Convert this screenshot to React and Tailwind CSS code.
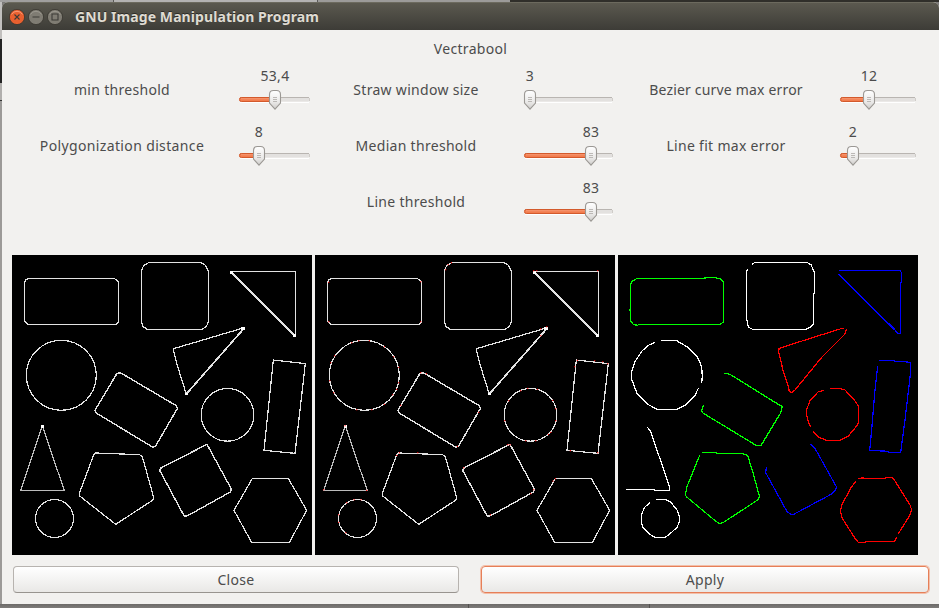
import React from "react";

const FONT = "font-['Noto_Sans','Open_Sans',sans-serif]";

function WindowButton({ active, children }) {
  return (
    <svg viewBox="0 0 16 16" className="h-4 w-4 shrink-0">
      <circle cx="8" cy="8" r="7.6" fill={active ? "#e9602f" : "#7f7c73"} stroke="#37352f" strokeWidth="0.8" />
      <path d="M2.5 5.5A6.3 6.3 0 0 1 13.5 5.5" fill="none" stroke={active ? "#f79a76" : "#9a978e"} strokeWidth="1" />
      <g fill="none" stroke="#3c3b37" strokeWidth="1.1">{children}</g>
    </svg>
  );
}

function Slider({ width, pos, value }) {
  return (
    <div className="h-14 shrink-0" style={{ width }}>
      <div className="h-[28px] pt-[4px]">
        <div className="w-10 text-center leading-5" style={{ marginLeft: pos - 20 }}>{value}</div>
      </div>
      <svg className="block h-[20px] overflow-visible" width={width} height="20" viewBox={`0 0 ${width} 20`}>
        <rect x="0.5" y="7.5" width={width - 1} height="4" rx="1.8" fill="#e3e1df" />
        <path d={`M1 7.5H${width - 1}`} stroke="#b9b5b1" />
        <path d={`M1 12.5H${width - 1}`} stroke="#ffffff" />
        <path d={`M${width - 0.5} 8V11`} stroke="#cfccc8" />
        {pos > 7 && (
          <>
            <rect x="0.5" y="7.5" width={pos} height="4" rx="1.8" fill="#f27c4d" stroke="#d35a2c" />
            <path d={`M2 8.8H${pos}`} stroke="#f8a27f" strokeWidth="0.8" />
          </>
        )}
        <g transform={`translate(${pos - 6} 0)`}>
          <path d="M0.5 4.5Q0.5 0.5 4.5 0.5H7.5Q11.5 0.5 11.5 4.5V13L6 19.2L0.5 13Z" fill="url(#thumb)" stroke="#9b9894" strokeWidth="1.1" />
          <path d="M4 7.5H8M4 9.5H8M4 11.5H8" stroke="#b5b2af" strokeWidth="0.9" />
        </g>
      </svg>
    </div>
  );
}

function Label({ className, children }) {
  return <div className={`flex h-14 shrink-0 items-center justify-center whitespace-nowrap pb-[2px] ${className}`}>{children}</div>;
}

function Frame({ children }) {
  return (
    <svg viewBox="9 15 900 900" className="block h-[300px] w-[300px] shrink-0 bg-black">
      {children}
    </svg>
  );
}

function Edges() {
  return (
    <g fill="none" stroke="#e2e2e2" strokeWidth="3.7" strokeLinejoin="round" shapeRendering="crispEdges">
      <path d="M60 85.500H316L328.500 95V216L320 223.500H56L46.500 214V97L52 88Z" />
      <path d="M420 37.500H576L590 46L598.500 66V214L592 230L578 238.500H416L402 230L396.500 214V64L404 46Z" />
      <path d="M668 64.500H858.500V258" />
      <path d="M667 66L858 258" strokeWidth="5.6" />
      <path d="M532 433L506 350L494 304V296L706 233" />
      <path d="M706 234L532 432" strokeWidth="5.2" />
      <circle cx="157" cy="376" r="105" />
      <path d="M324 370L334 368L500 466L506 474L440 588L432 592L260 488L258 481Z" strokeWidth="4.2" />
      <circle cx="655.5" cy="494.5" r="79" />
      <path d="M793 330L889 341L858 610L765 601Z" />
      <path d="M100 528L166 721.500H35Z" stroke="#bcbcbc" />
      <path d="M260 609L392 614L400 620L434 742L432 750L320 823L212 738L211 730L254 615Z" />
      <path d="M594 583L667 717L664 726L536 797L526 799L452 661L454 655Z" strokeWidth="4.2" />
      <path d="M730 685.500H838L893 781L841 877.500H728L675 781Z" />
      <circle cx="136.5" cy="805.5" r="57" />
      <g fill="#fff" stroke="none">
        <path d="M663 62h9v10h-9zM853 253h9v8h-9zM696 231h12v9h-12zM527 428h9v7h-9zM96 525h8v9h-8z" />
      </g>
    </g>
  );
}

const MARKS = [
  [50, 97], [326, 95], [50, 215], [326, 215], [401, 59], [408, 44], [418, 38], [665, 62], [674, 62], [857, 62],
  [704, 230], [686, 236], [686, 257], [140, 272], [172, 272], [119, 278], [217, 290], [245, 320], [260, 352],
  [260, 398], [254, 418], [242, 434], [217, 463], [179, 479], [134, 479], [65, 428], [53, 392], [56, 338], [68, 317],
  [326, 368], [343, 371], [266, 466], [500, 487], [436, 589], [647, 415], [676, 418], [626, 422], [590, 452],
  [722, 451], [731, 476], [578, 512], [731, 512], [716, 547], [709, 553], [671, 572], [641, 572],
  [796, 331], [788, 350], [848, 332], [872, 335], [887, 341], [775, 602], [857, 608], [99, 527], [35, 719], [164, 721],
  [262, 608], [317, 608], [254, 616], [587, 584], [594, 584], [665, 719], [656, 731], [535, 794], [455, 653],
  [730, 686], [723, 693], [126, 749], [147, 749], [104, 758], [80, 794], [80, 817], [101, 848],
];

function Traced() {
  return (
    <g fill="none" strokeWidth="3.7" shapeRendering="crispEdges">
      <g stroke="#00ff00">
        <path d="M69 223.500H315L325.500 216V95L316 87L300 82.500H270V85.500H66L52 93L46.500 103V175L43.500 180L46.500 185V213L56 224L69 226" />
        <path d="M327 370.500H338L350 376L480 457L502 470L496 490L438 586.500H424L410 578L262 488L260 480L266 466" />
        <path d="M262 607.500H304L306 610.500H382L398 616L415 672L433 738L431 748L324 818L314 821L304 815L214 740L211.500 735L215 712L254 616" />
      </g>
      <g stroke="#ffffff">
        <path d="M410 44L419 37.500H576L588 44L598.500 68V130L595.500 131V222L586 232L570 238.500H414L401 232L397 222V212L394.500 210V65L397 58" />
        <path d="M120 277L100 286L80 304L60 335L49.500 365V386L58 410L66 430L100 464L128 478.500H184L210 466L240 436L250 415M260 398L262 380L260 350L248 322L220 293L184 271.500H138" />
        <path d="M97 532L106 542L163.500 710V721.500H118V718.500H33" />
        <path d="M124 748.500H150L166 755L186 780L193.500 800V815L186 832L160 856L148 862.500H122L104 853L84 832L79.500 820V795L88 773L104 758" />
      </g>
      <g stroke="#0000ff">
        <path d="M670 72L840 240L849 250.500H856.500V100L859.500 96V68L855 61.500H672" />
        <path d="M670 72L840 240" strokeWidth="4.6" />
        <path d="M792 331.500H835L840 334.500H868L886.500 338V370L870 510L857 607.500H820V604L764 601L770 540L780 420L788 348" />
        <path d="M587 583L600 595L664 710L662 720L650 732L536 793L525 792L515 783L452 668L454 652" />
      </g>
      <g stroke="#ff0000">
        <path d="M694 237L690 252L620 322L540 420L530 428L523 425L520 410L505 365L491 305L492 296L498 293L640 248L680 235.500H687" />
        <path d="M627 421L610 425L585 452L574.500 480V495L580 515L587 530M595 545L612 562L636 571.500H674L700 558L725 528L730.500 518V470L722 455L690 420L674 415.500H645" />
        <path d="M722 694L710 710L680 765L676.500 785L682 805L720 865L730 877.500H752V874.500H838L845 862M850 851L885 795L890 780L885 765L840 693L832 682.500H812L810 685.500H730M738 682.500H748" />
      </g>
    </g>
  );
}

export default function App() {
  return (
    <div className={`flex h-[608px] w-[939px] flex-col overflow-hidden bg-[#7b7977] text-[14px] tracking-[0.3px] text-[#4c4c4c] ${FONT}`}>
      <svg width="0" height="0" className="absolute">
        <defs>
          <linearGradient id="thumb" x1="0" y1="0" x2="0" y2="1">
            <stop offset="0" stopColor="#ffffff" />
            <stop offset="0.6" stopColor="#ebeae9" />
            <stop offset="1" stopColor="#cfcdca" />
          </linearGradient>
        </defs>
      </svg>
      <div className="flex h-0.5 shrink-0">
        <div className="w-[113px] bg-[#a09f9e]" />
        <div className="w-px bg-[#5a5957]" />
        <div className="w-[203px] bg-[#b4b3b2]" />
        <div className="w-px bg-[#5a5957]" />
        <div className="w-[192px] bg-[#9c9b99]" />
        <div className="flex-1 bg-[#302f2a]" />
      </div>
      <div className="flex h-[602px] shrink-0">
        <div className="flex w-0.5 shrink-0 flex-col bg-[#9c9a98]">
          <div className="h-[37px] bg-[#c2c0be]" />
          <div className="h-[44px] bg-[#242424]" />
          <div className="h-[17px] bg-[#b1afad]" />
          <div className="h-px bg-[#333333]" />
        </div>
        <div className="flex w-[937px] flex-col overflow-hidden rounded-t-md bg-[#f2f1ef]">
          <div className="flex h-7 shrink-0 items-center gap-[3px] border-t border-[#6c6a5e] bg-linear-to-b from-[#5b594f] to-[#3d3c37] pl-[7px]">
            <WindowButton active><path d="M5.500 5.500L10.500 10.500M10.500 5.500L5.500 10.500" /></WindowButton>
            <WindowButton><path d="M4.500 8H11.500" /></WindowButton>
            <WindowButton><path d="M5 5H11V11H5Z" /></WindowButton>
            <h1 className="ml-[9px] whitespace-nowrap text-[14px] font-bold leading-none tracking-[0.08px] text-[#dfdbd2] [text-shadow:0_-1px_0_#2c2b27]">GNU Image Manipulation Program</h1>
          </div>
          <div className="flex h-8 shrink-0 items-end justify-center pb-[3px] leading-5">Vectrabool</div>
          <div className="flex flex-col">
            <div className="flex pl-[10px]">
              <Label className="w-[220px]">min threshold</Label>
              <div className="w-[7px]" />
              <Slider width={71} pos={36} value="53,4" />
              <Label className="ml-[10px] w-[192px]">Straw window size</Label>
              <div className="w-3" />
              <Slider width={89} pos={6} value="3" />
              <Label className="ml-[17px] w-[192px] tracking-[0.18px]">Bezier curve max error</Label>
              <div className="w-[18px]" />
              <Slider width={76} pos={29} value="12" />
            </div>
            <div className="flex pl-[10px]">
              <Label className="w-[220px] tracking-[0.36px]">Polygonization distance</Label>
              <div className="w-[7px]" />
              <Slider width={71} pos={20} value="8" />
              <Label className="ml-[10px] w-[192px]">Median threshold</Label>
              <div className="w-3" />
              <Slider width={89} pos={67} value="83" />
              <Label className="ml-[17px] w-[192px]">Line fit max error</Label>
              <div className="w-[18px]" />
              <Slider width={76} pos={13} value="2" />
            </div>
            <div className="flex pl-[318px]">
              <Label className="w-[192px]">Line threshold</Label>
              <div className="w-3" />
              <Slider width={89} pos={67} value="83" />
            </div>
          </div>
          <div className="mt-[25px] flex gap-[3px] pl-[10px]">
            <Frame><Edges /></Frame>
            <Frame>
              <Edges />
              <g fill="#ff0000">
                {MARKS.map(([x, y]) => <rect key={`${x}-${y}`} x={x - 1.5} y={y - 1.5} width="3.4" height="3.4" />)}
              </g>
            </Frame>
            <Frame><Traced /></Frame>
          </div>
          <div className="mt-[10px] flex gap-[21px] pl-[10px]">
            <button className="ml-[1px] mt-[1px] h-[27px] w-[446px] rounded border border-[#b7b3af] border-b-[#98948f] bg-linear-to-b from-white to-[#e9e8e6] leading-none">Close</button>
            <button className="ml-[1px] mt-[1px] h-[27px] w-[448px] rounded border border-[#e67f58] bg-linear-to-b from-white to-[#e9e8e6] leading-none shadow-[0_0_0_1px_#f3bfa9]">Apply</button>
          </div>
        </div>
      </div>
      <div className="flex h-1 bg-linear-to-b from-[#6c6a68] to-[#7e7c7a]">
        <div className="w-[469px] border-r border-[#555351]" />
        <div className="w-[181px] border-r border-[#555351]" />
      </div>
    </div>
  );
}
